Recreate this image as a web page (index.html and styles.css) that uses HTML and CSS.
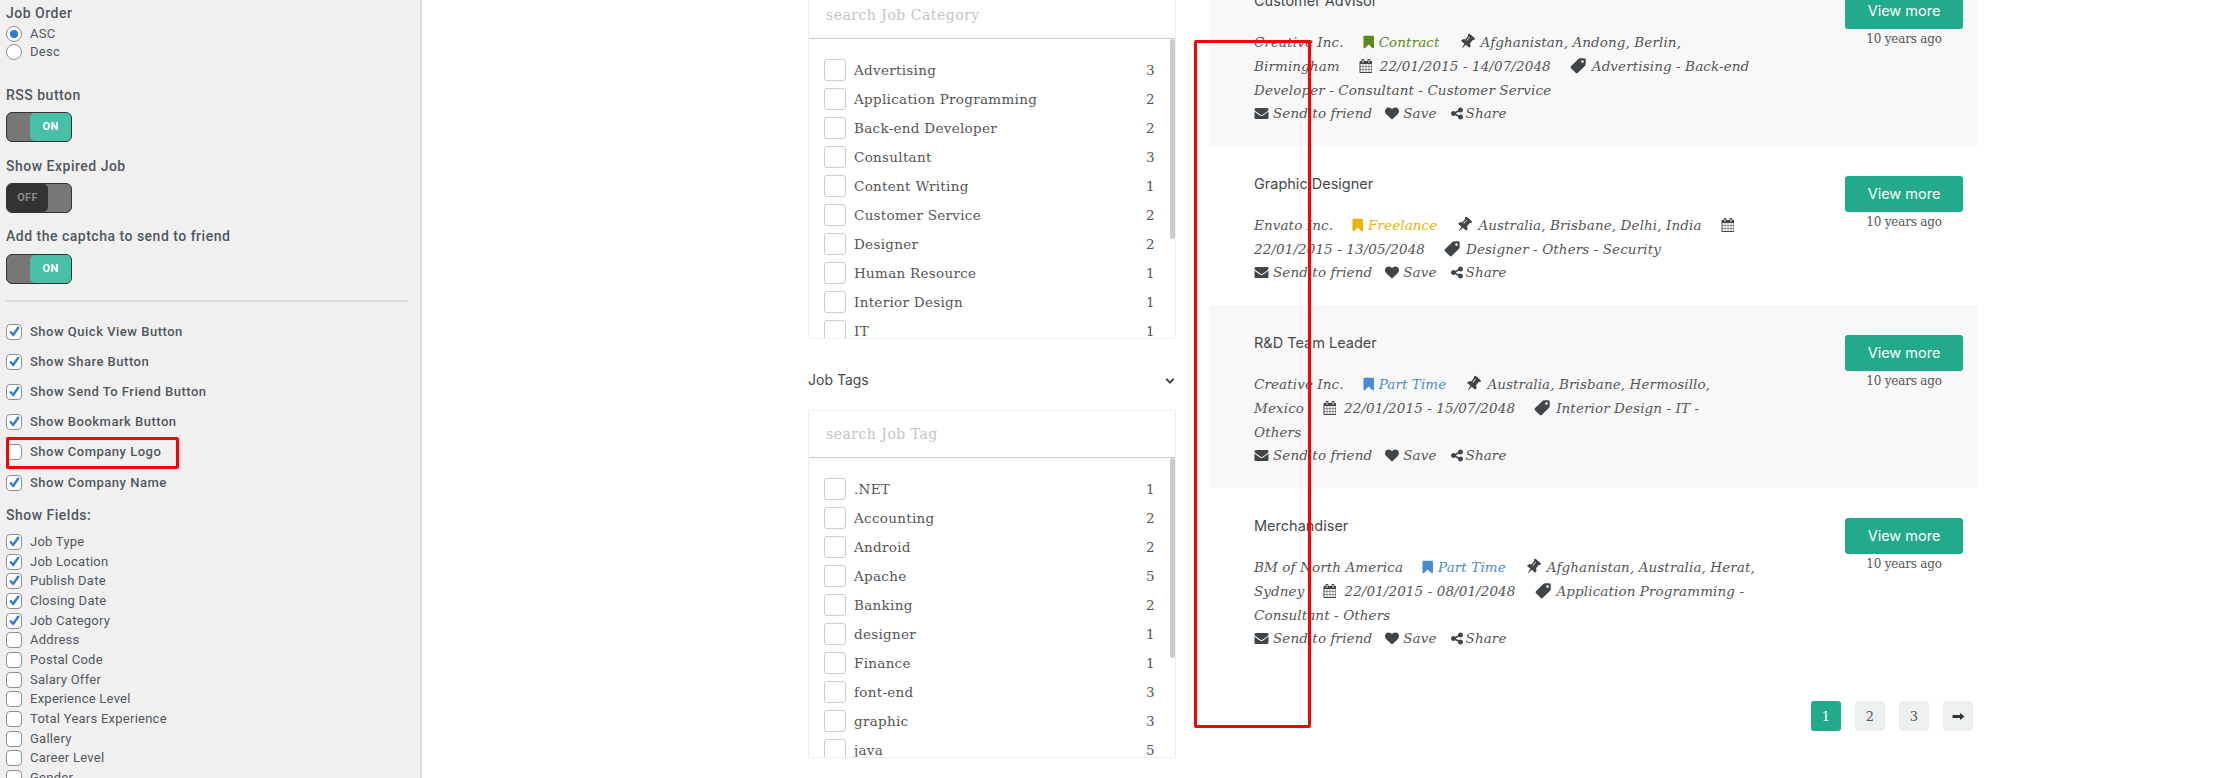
FILE: index.html
```html
<!DOCTYPE html>
<html lang="en">
<head>
<meta charset="utf-8">
<title>Job listing settings</title>
<link rel="stylesheet" href="styles.css">
</head>
<body>
<svg class="defs" aria-hidden="true">
  <symbol id="i-bookmark" viewBox="200 128 1340 1512"><path d="M1420 128q23 0 44 9 33 13 52.5 41t19.5 62v1289q0 34-19.5 62t-52.5 41q-19 8-44 8-48 0-83-32l-441-424-441 424q-36 33-83 33-23 0-44-9-33-13-52.5-41t-19.5-62v-1289q0-34 19.5-62t52.5-41q21-9 44-9h1048z"/></symbol>
  <symbol id="i-pin" viewBox="-300 0 1752 1792"><path transform="rotate(40 576 900)" d="M480 864v-448q0-14-9-23t-23-9-23 9-9 23v448q0 14 9 23t23 9 23-9 9-23zm672 352q0 26-19 45t-45 19h-429l-51 483q-2 12-10.5 20.5t-20.5 8.5h-1q-27 0-32-27l-76-485h-404q-26 0-45-19t-19-45q0-123 78.5-221.5t177.5-98.5v-512q-52 0-90-38t-38-90 38-90 90-38h640q52 0 90 38t38 90-38 90-90 38v512q99 0 177.5 98.5t78.5 221.5z"/></symbol>
  <symbol id="i-cal" viewBox="0 0 1664 1792"><path d="M192 1664h288v-288h-288v288zm352 0h320v-288h-320v288zm-352-352h288v-320h-288v320zm352 0h320v-320h-320v320zm-352-384h288v-288h-288v288zm736 736h320v-288h-320v288zm-384-736h320v-288h-320v288zm768 736h288v-288h-288v288zm-384-352h320v-320h-320v320zm-352-864v-288q0-13-9.5-22.5t-22.5-9.5h-64q-13 0-22.5 9.5t-9.5 22.5v288q0 13 9.5 22.5t22.5 9.5h64q13 0 22.5-9.5t9.5-22.5zm736 864h288v-320h-288v320zm-384-384h320v-288h-320v288zm384 0h288v-288h-288v288zm32-480v-288q0-13-9.5-22.5t-22.5-9.5h-64q-13 0-22.5 9.5t-9.5 22.5v288q0 13 9.5 22.5t22.5 9.5h64q13 0 22.5-9.5t9.5-22.5zm384-64v1280q0 52-38 90t-90 38h-1408q-52 0-90-38t-38-90v-1280q0-52 38-90t90-38h128v-96q0-66 47-113t113-47h64q66 0 113 47t47 113v96h384v-96q0-66 47-113t113-47h64q66 0 113 47t47 113v96h128q52 0 90 38t38 90z"/></symbol>
  <symbol id="i-tag" viewBox="0 0 1700 1700"><path transform="rotate(90 850 850)" d="M576 448q0-53-37.5-90.5t-90.5-37.5-90.5 37.5-37.5 90.5 37.5 90.5 90.5 37.5 90.5-37.5 37.5-90.5zm1067 576q0 53-37 90l-491 492q-39 37-91 37-53 0-90-37l-715-716q-38-37-64.5-101t-26.5-117v-416q0-52 38-90t90-38h416q53 0 117 26.5t102 64.5l715 714q37 39 37 91z"/></symbol>
  <symbol id="i-mail" viewBox="0 128 1792 1536"><path d="M1792 710v794q0 66-47 113t-113 47h-1472q-66 0-113-47t-47-113v-794q44 49 101 87 362 246 497 345 57 42 92.5 65.5t94.5 48 110 24.5h2q51 0 110-24.5t94.5-48 92.5-65.5q170-123 498-345 57-39 100-87zm0-294q0 79-49 151t-122 123q-376 261-468 325-10 7-42.5 30.5t-54 38-52 32.5-57.5 27-50 9h-2q-23 0-50-9t-57.5-27-52-32.5-54-38-42.5-30.5q-91-64-262-182.5t-205-142.5q-62-42-117-115.5t-55-136.5q0-78 41.5-130t118.5-52h1472q65 0 112.5 47t47.5 113z"/></symbol>
  <symbol id="i-heart" viewBox="0 128 1792 1536"><path d="M896 1664q-26 0-44-18l-624-602q-10-8-27.5-26t-55.5-65.5-68-97.5-53.5-121-23.5-138q0-220 127-344t351-124q62 0 126.5 21.5t120 58 95.5 68.5 76 68q36-36 76-68t95.5-68.5 120-58 126.5-21.5q224 0 351 124t127 344q0 221-229 450l-623 600q-18 18-44 18z"/></symbol>
  <symbol id="i-share" viewBox="0 128 1664 1536"><path d="M1344 1024q133 0 226.5 93.5t93.5 226.5-93.5 226.5-226.5 93.5-226.5-93.5-93.5-226.5q0-12 2-34l-360-180q-92 86-218 86-133 0-226.5-93.5t-93.5-226.5 93.5-226.5 226.5-93.5q126 0 218 86l360-180q-2-22-2-34 0-133 93.5-226.5t226.5-93.5 226.5 93.5 93.5 226.5-93.5 226.5-226.5 93.5q-126 0-218-86l-360 180q2 22 2 34t-2 34l360 180q92-86 218-86z"/></symbol>
  <symbol id="i-chev" viewBox="0 300 1792 1300"><path d="M1683 808l-742 741q-19 19-45 19t-45-19l-742-741q-19-19-19-45.5t19-45.5l166-165q19-19 45-19t45 19l531 531 531-531q19-19 45-19t45 19l166 165q19 19 19 45.5t-19 45.5z"/></symbol>
  <symbol id="i-arrow" viewBox="0 0 24 14"><path d="M0 4h15V0l9 7-9 7v-4H0z"/></symbol>
  <symbol id="i-check" viewBox="0 0 16 16"><path d="M2.500 8.400l2-1.900 2.300 2.700L12.300 1.500l2.300 1.600-7.400 10.400z"/></symbol>
</svg>

<aside class="sidebar">
  <h4 class="opt-title">Job Order</h4>
  <label class="radio-row"><span class="radio on"></span>ASC</label>
  <label class="radio-row"><span class="radio"></span>Desc</label>

  <h4 class="opt-title first">RSS button</h4>
  <div class="toggle on"><span class="knob">ON</span></div>
  <h4 class="opt-title">Show Expired Job</h4>
  <div class="toggle off"><span class="knob">OFF</span></div>
  <h4 class="opt-title tight">Add the captcha to send to friend</h4>
  <div class="toggle on low"><span class="knob">ON</span></div>
  <hr class="sep">

  <div class="bold-checks">
    <label class="check-row"><span class="cb"><svg><use href="#i-check"/></svg></span>Show Quick View Button</label>
    <label class="check-row"><span class="cb"><svg><use href="#i-check"/></svg></span>Show Share Button</label>
    <label class="check-row"><span class="cb"><svg><use href="#i-check"/></svg></span>Show Send To Friend Button</label>
    <label class="check-row"><span class="cb"><svg><use href="#i-check"/></svg></span>Show Bookmark Button</label>
    <label class="check-row"><span class="cb"></span>Show Company Logo</label>
    <label class="check-row"><span class="cb"><svg><use href="#i-check"/></svg></span>Show Company Name</label>
  </div>

  <h4 class="opt-title fields">Show Fields:</h4>
  <div class="field-checks">
    <label class="check-row"><span class="cb"><svg><use href="#i-check"/></svg></span>Job Type</label>
    <label class="check-row"><span class="cb"><svg><use href="#i-check"/></svg></span>Job Location</label>
    <label class="check-row"><span class="cb"><svg><use href="#i-check"/></svg></span>Publish Date</label>
    <label class="check-row"><span class="cb"><svg><use href="#i-check"/></svg></span>Closing Date</label>
    <label class="check-row"><span class="cb"><svg><use href="#i-check"/></svg></span>Job Category</label>
    <label class="check-row"><span class="cb"></span>Address</label>
    <label class="check-row"><span class="cb"></span>Postal Code</label>
    <label class="check-row"><span class="cb"></span>Salary Offer</label>
    <label class="check-row"><span class="cb"></span>Experience Level</label>
    <label class="check-row"><span class="cb"></span>Total Years Experience</label>
    <label class="check-row"><span class="cb"></span>Gallery</label>
    <label class="check-row"><span class="cb"></span>Career Level</label>
    <label class="check-row"><span class="cb"></span>Gender</label>
  </div>
</aside>

<main class="main">
  <section class="filters">
    <div class="filter-box">
      <div class="filter-search">search Job Category</div>
      <div class="filter-list">
        <span class="scroll"></span>
        <div class="f-row"><span class="f-cb"></span><span class="f-name">Advertising</span><span>3</span></div>
        <div class="f-row"><span class="f-cb"></span><span class="f-name">Application Programming</span><span>2</span></div>
        <div class="f-row"><span class="f-cb"></span><span class="f-name">Back-end Developer</span><span>2</span></div>
        <div class="f-row"><span class="f-cb"></span><span class="f-name">Consultant</span><span>3</span></div>
        <div class="f-row"><span class="f-cb"></span><span class="f-name">Content Writing</span><span>1</span></div>
        <div class="f-row"><span class="f-cb"></span><span class="f-name">Customer Service</span><span>2</span></div>
        <div class="f-row"><span class="f-cb"></span><span class="f-name">Designer</span><span>2</span></div>
        <div class="f-row"><span class="f-cb"></span><span class="f-name">Human Resource</span><span>1</span></div>
        <div class="f-row"><span class="f-cb"></span><span class="f-name">Interior Design</span><span>1</span></div>
        <div class="f-row"><span class="f-cb"></span><span class="f-name">IT</span><span>1</span></div>
      </div>
    </div>
    <div class="filter-head"><span>Job Tags</span><svg class="chev"><use href="#i-chev"/></svg></div>
    <div class="filter-box">
      <div class="filter-search">search Job Tag</div>
      <div class="filter-list">
        <span class="scroll"></span>
        <div class="f-row"><span class="f-cb"></span><span class="f-name">.NET</span><span>1</span></div>
        <div class="f-row"><span class="f-cb"></span><span class="f-name">Accounting</span><span>2</span></div>
        <div class="f-row"><span class="f-cb"></span><span class="f-name">Android</span><span>2</span></div>
        <div class="f-row"><span class="f-cb"></span><span class="f-name">Apache</span><span>5</span></div>
        <div class="f-row"><span class="f-cb"></span><span class="f-name">Banking</span><span>2</span></div>
        <div class="f-row"><span class="f-cb"></span><span class="f-name">designer</span><span>1</span></div>
        <div class="f-row"><span class="f-cb"></span><span class="f-name">Finance</span><span>1</span></div>
        <div class="f-row"><span class="f-cb"></span><span class="f-name">font-end</span><span>3</span></div>
        <div class="f-row"><span class="f-cb"></span><span class="f-name">graphic</span><span>3</span></div>
        <div class="f-row"><span class="f-cb"></span><span class="f-name">java</span><span>5</span></div>
      </div>
    </div>
  </section>

  <section class="jobs">
    <article class="job alt">
      <div class="job-body">
        <h3 class="job-title">Customer Advisor</h3>
        <p class="meta"><span class="it">Creative Inc.</span><span class="it green"><svg class="ic bm"><use href="#i-bookmark"/></svg>Contract</span><span class="it"><svg class="ic pin"><use href="#i-pin"/></svg>Afghanistan, Andong, Berlin,</span><br>
        <span class="it">Birmingham</span><span class="it"><svg class="ic cal"><use href="#i-cal"/></svg>22/01/2015 - 14/07/2048</span><span class="it"><svg class="ic tag"><use href="#i-tag"/></svg>Advertising - Back-end</span><br>
        Developer - Consultant - Customer Service</p>
        <p class="actions"><span class="act"><svg class="ic mail"><use href="#i-mail"/></svg>Send to friend</span><span class="act"><svg class="ic heart"><use href="#i-heart"/></svg>Save</span><span class="act"><svg class="ic share"><use href="#i-share"/></svg>Share</span></p>
      </div>
      <div class="job-side"><a class="btn">View more</a><span class="ago">10 years ago</span></div>
    </article>

    <article class="job">
      <div class="job-body">
        <h3 class="job-title">Graphic Designer</h3>
        <p class="meta"><span class="it">Envato Inc.</span><span class="it yellow"><svg class="ic bm"><use href="#i-bookmark"/></svg>Freelance</span><span class="it"><svg class="ic pin"><use href="#i-pin"/></svg>Australia, Brisbane, Delhi, India</span><span class="it"><svg class="ic cal"><use href="#i-cal"/></svg></span><br>
        <span class="it">22/01/2015 - 13/05/2048</span><span class="it"><svg class="ic tag"><use href="#i-tag"/></svg>Designer - Others - Security</span></p>
        <p class="actions"><span class="act"><svg class="ic mail"><use href="#i-mail"/></svg>Send to friend</span><span class="act"><svg class="ic heart"><use href="#i-heart"/></svg>Save</span><span class="act"><svg class="ic share"><use href="#i-share"/></svg>Share</span></p>
      </div>
      <div class="job-side"><a class="btn">View more</a><span class="ago">10 years ago</span></div>
    </article>

    <article class="job alt">
      <div class="job-body">
        <h3 class="job-title">R&amp;D Team Leader</h3>
        <p class="meta"><span class="it">Creative Inc.</span><span class="it blue"><svg class="ic bm"><use href="#i-bookmark"/></svg>Part Time</span><span class="it"><svg class="ic pin"><use href="#i-pin"/></svg>Australia, Brisbane, Hermosillo,</span><br>
        <span class="it">Mexico</span><span class="it"><svg class="ic cal"><use href="#i-cal"/></svg>22/01/2015 - 15/07/2048</span><span class="it"><svg class="ic tag"><use href="#i-tag"/></svg>Interior Design - IT -</span><br>
        Others</p>
        <p class="actions"><span class="act"><svg class="ic mail"><use href="#i-mail"/></svg>Send to friend</span><span class="act"><svg class="ic heart"><use href="#i-heart"/></svg>Save</span><span class="act"><svg class="ic share"><use href="#i-share"/></svg>Share</span></p>
      </div>
      <div class="job-side"><a class="btn">View more</a><span class="ago">10 years ago</span></div>
    </article>

    <article class="job">
      <div class="job-body">
        <h3 class="job-title">Merchandiser</h3>
        <p class="meta"><span class="it">BM of North America</span><span class="it blue"><svg class="ic bm"><use href="#i-bookmark"/></svg>Part Time</span><span class="it"><svg class="ic pin"><use href="#i-pin"/></svg>Afghanistan, Australia, Herat,</span><br>
        <span class="it">Sydney</span><span class="it"><svg class="ic cal"><use href="#i-cal"/></svg>22/01/2015 - 08/01/2048</span><span class="it"><svg class="ic tag"><use href="#i-tag"/></svg>Application Programming -</span><br>
        Consultant - Others</p>
        <p class="actions"><span class="act"><svg class="ic mail"><use href="#i-mail"/></svg>Send to friend</span><span class="act"><svg class="ic heart"><use href="#i-heart"/></svg>Save</span><span class="act"><svg class="ic share"><use href="#i-share"/></svg>Share</span></p>
      </div>
      <div class="job-side"><a class="btn">View more</a><span class="ago">10 years ago</span></div>
    </article>

    <nav class="pager">
      <a class="page current">1</a>
      <a class="page">2</a>
      <a class="page">3</a>
      <a class="page"><svg class="arrow"><use href="#i-arrow"/></svg></a>
    </nav>
  </section>
</main>

<div class="mark mark-logo"></div>
<div class="mark mark-column"></div>
</body>
</html>
```

FILE: styles.css
```css
* { box-sizing: border-box; }
html, body { margin: 0; height: 778px; overflow: hidden; background: #fff; }
body { position: relative; display: flex; align-items: flex-start; font-family: "DejaVu Serif", serif; }
.defs { position: absolute; width: 0; height: 0; }

/* settings sidebar */
.sidebar { width: 422px; height: 778px; flex: none; overflow: hidden; padding: 3px 0 0 6px; background: #f0f0f1; border-right: 2px solid #dcdcde; font: 13px/20px Roboto, sans-serif; color: #50575e; letter-spacing: .25px; }
.opt-title { margin: 14px 0 0; font-size: 14px; font-weight: 500; line-height: 20px; letter-spacing: .5px; }
.opt-title:first-child { margin-top: 0; }
.opt-title.first { margin-top: 24px; }
.opt-title.tight { margin-top: 13px; }
.opt-title.fields { margin-top: 12px; }
.radio-row { display: flex; align-items: center; height: 18px; }
.radio-row:first-of-type { margin-top: 2px; }
.radio { width: 16px; height: 16px; margin-right: 8px; border: 1px solid #8c8f94; border-radius: 50%; background: #fff; display: flex; align-items: center; justify-content: center; }
.radio.on::before { content: ""; width: 8px; height: 8px; border-radius: 50%; background: #2b7fd0; }
.toggle { display: flex; width: 66px; height: 30px; margin-top: 7px; border: 1px solid #333; border-radius: 6px; background: #777; font: 700 11px/28px Roboto, sans-serif; }
.toggle.on { justify-content: flex-end; }
.toggle.low { margin-top: 8px; }
.knob { width: 41px; text-align: center; border-radius: 5px; }
.toggle.on .knob { background: #48bfa7; color: #fff; }
.toggle.off .knob { background: #333; color: #888; }
.sep { height: 2px; margin: 16px 12px 0 0; border: 0; background: #dcdcde; }
.bold-checks { display: flex; flex-direction: column; gap: 10px; margin-top: 20px; font-weight: 500; letter-spacing: .5px; }
.bold-checks .check-row:last-child { margin-top: 1px; }
.check-row { display: flex; align-items: center; height: 20px; white-space: nowrap; }
.field-checks { margin-top: 7px; }
.field-checks .check-row { height: 19.7px; }
.cb { flex: none; width: 16px; height: 16px; margin-right: 8px; border: 1px solid #8c8f94; border-radius: 4px; background: #fff; }
.cb svg { display: block; width: 14px; height: 14px; fill: #2b7fd0; }

/* main area */
.main { display: grid; grid-template-columns: 368px 769px; column-gap: 33px; padding-left: 386px; align-items: start; }

/* filters */
.filters { margin-top: -9px; }
.filter-box { border: 1px solid #eee; border-radius: 1px; }
.filter-search { height: 47px; padding-left: 17px; border-bottom: 1px solid #ccc; font-size: 14px; letter-spacing: .5px; line-height: 46px; color: #c4c4c4; }
.filter-list { position: relative; height: 299px; padding: 20px 20px 0 15px; overflow: hidden; font-size: 13.5px; letter-spacing: .3px; color: #555; }
.scroll { position: absolute; top: 0; right: 0; width: 5px; height: 200px; background: #ccc; border-radius: 3px; }
.f-row { display: flex; align-items: center; height: 22px; margin-bottom: 7px; }
.f-cb { width: 22px; height: 22px; margin-right: 8px; border: 1px solid #ccc; border-radius: 3px; }
.f-name { flex: 1; }
.filter-head { display: flex; justify-content: space-between; align-items: center; height: 20px; margin: 31px 0 20px; font: 400 14px/20px Inter, sans-serif; color: #44494b; }
.chev { width: 10px; height: 7px; margin-right: 1px; fill: #44494b; }

/* jobs */
.jobs { margin-top: -37px; }
.job { display: flex; justify-content: space-between; padding: 28px 15px 21px 45px; }
.job.alt { background: #f8f8f8; }
.job-title { margin: 0 0 19px; font: 400 14.5px/20px Inter, sans-serif; color: #44494b; }
.meta, .actions { margin: 0; font-style: italic; font-size: 13.5px; letter-spacing: .1px; line-height: 24px; color: #555; white-space: nowrap; }
.actions { margin-top: -1px; }
.it { display: inline-block; margin-right: 19px; }
.act { display: inline-block; margin-right: 13px; }
.green { color: #5a8a1f; }
.yellow { color: #eab308; }
.blue { color: #4a8ad4; }
.ic { display: inline-block; vertical-align: -2px; margin-right: 5px; fill: #3f4548; }
.green .ic, .yellow .ic, .blue .ic { fill: currentColor; }
.bm { width: 11px; height: 14px; }
.pin { width: 17px; height: 17px; vertical-align: -3px; }
.cal { width: 13px; height: 14px; margin-right: 8px; }
.tag { width: 17px; height: 17px; vertical-align: -3px; }
.mail { width: 15px; height: 12px; vertical-align: -1px; margin-right: 4px; }
.heart { width: 14px; height: 13px; margin-right: 4px; }
.share { width: 13px; height: 13px; margin-right: 3px; }
.job-side { display: flex; flex-direction: column; align-items: center; width: 118px; margin-top: 2px; }
.btn { display: block; width: 118px; height: 36px; border-radius: 3px; background: #22ab8a; color: #fff; font: 400 14.5px/36px Inter, sans-serif; text-align: center; }
.ago { font-size: 12px; letter-spacing: -.2px; line-height: 20px; color: #555; white-space: nowrap; }
.pager { display: flex; justify-content: flex-end; gap: 14px; margin-top: 30px; padding-right: 5px; }
.page { display: flex; align-items: center; justify-content: center; width: 30px; height: 30px; border-radius: 3px; background: #ecf0f1; font-size: 13px; color: #555; }
.page.current { background: #22ab8a; color: #fff; }
.arrow { width: 13px; height: 7px; fill: #333; }

/* red annotation boxes drawn over the page */
.mark { position: absolute; border: 3px solid #f00; border-radius: 2px; }
.mark-logo { left: 6px; top: 437px; width: 173px; height: 32px; }
.mark-column { left: 1194px; top: 40px; width: 117px; height: 688px; }
```
